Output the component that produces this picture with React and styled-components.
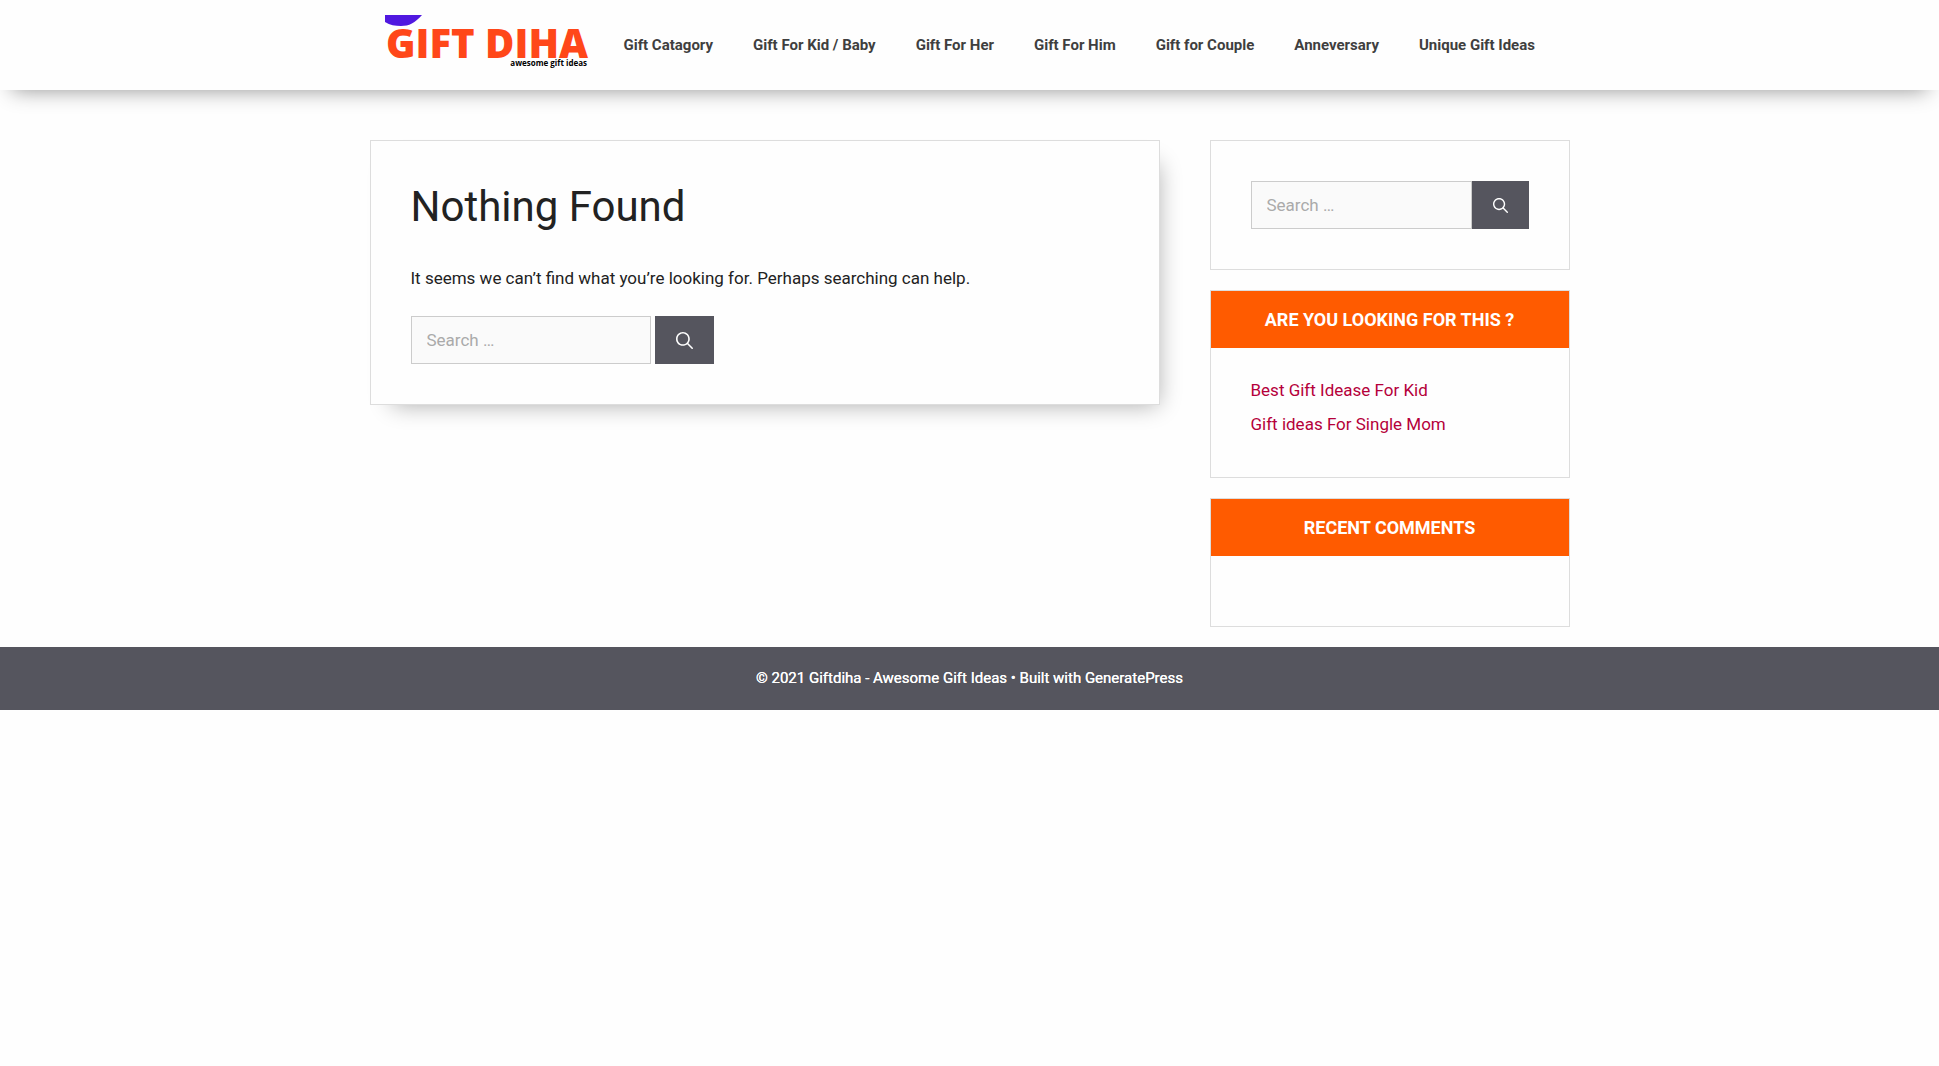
import React, { useState } from "react"
import styled, { createGlobalStyle } from "styled-components"

const navItems = [
    'Gift Catagory',
    'Gift For Kid / Baby',
    'Gift For Her',
    'Gift For Him',
    'Gift for Couple',
    'Anneversary',
    'Unique Gift Ideas',
]

const posts = ['Best Gift Idease For Kid', 'Gift ideas For Single Mom']

const SearchForm = ({ id, wide }) => {
    const [query, setQuery] = useState('')

    return (
        <Form role="search" $wide={wide} onSubmit={(e) => e.preventDefault()}>
            <SearchInput
                id={id}
                type="search"
                aria-label="Search for"
                placeholder="Search …"
                $wide={wide}
                value={query}
                onChange={(e) => setQuery(e.target.value)}
            />
            <SearchButton type="submit" aria-label="Search" $wide={wide}>
                <SearchIcon viewBox="0 0 512 512" $wide={wide}>
                    <path
                        fillRule="evenodd"
                        clipRule="evenodd"
                        d="M208 48c-88.366 0-160 71.634-160 160s71.634 160 160 160 160-71.634 160-160S296.366 48 208 48zM0 208C0 93.125 93.125 0 208 0s208 93.125 208 208c0 48.741-16.765 93.566-44.843 129.024l133.826 134.018c9.366 9.379 9.355 24.575-.025 33.941-9.379 9.366-24.575 9.355-33.941-.025L337.238 370.987C301.747 399.167 256.839 416 208 416 93.125 416 0 322.875 0 208z"
                    />
                </SearchIcon>
            </SearchButton>
        </Form>
    )
}

const Logo = () => (
    <LogoLink href="#" aria-label="Giftdiha - Awesome Gift Ideas">
        <svg width="206" height="60" viewBox="0 0 206 60">
            <path d="M0 0H37C30 8 24 11 16 11C10 11 5 10 0 7Z" fill="#5018e0" />
            <LogoName x="1" y="43">GIFT DIHA</LogoName>
            <LogoTagline x="202" y="51" textAnchor="end">awesome gift ideas</LogoTagline>
        </svg>
    </LogoLink>
)

const App = () => {
    return (
        <>
            <GlobalStyle />
            <Header>
                <HeaderInner>
                    <Logo />
                    <Nav>
                        {navItems.map((item) => (
                            <NavLink href="#" key={item}>{item}</NavLink>
                        ))}
                    </Nav>
                </HeaderInner>
            </Header>

            <Content>
                <Main>
                    <Title>Nothing Found</Title>
                    <Text>It seems we can’t find what you’re looking for. Perhaps searching can help.</Text>
                    <SearchForm id="main-search" />
                </Main>

                <Sidebar>
                    <Widget>
                        <SearchWrap>
                            <SearchForm id="side-search" wide />
                        </SearchWrap>
                    </Widget>
                    <Widget>
                        <WidgetTitle>ARE YOU LOOKING FOR THIS ?</WidgetTitle>
                        <PostList>
                            {posts.map((post) => (
                                <li key={post}><PostLink href="#">{post}</PostLink></li>
                            ))}
                        </PostList>
                    </Widget>
                    <Widget>
                        <WidgetTitle>RECENT COMMENTS</WidgetTitle>
                        <PostList />
                    </Widget>
                </Sidebar>
            </Content>

            <Footer>
                © 2021 Giftdiha - Awesome Gift Ideas • Built with <FooterLink href="#">GeneratePress</FooterLink>
            </Footer>
        </>
    )
}

const GlobalStyle = createGlobalStyle`
    * {
        box-sizing: border-box;
    }

    body {
        margin: 0;
        background: #fefefe;
        color: #222222;
        font-family: Roboto, "Liberation Sans", sans-serif;
        font-size: 17px;
        line-height: 25px;
    }
`

const Header = styled.header`
    background: #fefefe;
    box-shadow: 0 12px 20px -12px rgba(0, 0, 0, 0.43);
`

const HeaderInner = styled.div`
    display: flex;
    align-items: center;
    gap: 13px;
    max-width: 1200px;
    min-height: 90px;
    margin: 0 auto;
    padding-left: 15px;
`

const LogoLink = styled.a`
    display: block;
    height: 60px;
`

const LogoName = styled.text`
    fill: #ff4719;
    font-family: "Open Sans", sans-serif;
    font-size: 40px;
    font-weight: 800;
`

const LogoTagline = styled.text`
    fill: #000000;
    font-family: "Open Sans", sans-serif;
    font-size: 8px;
    font-weight: 700;
`

const Nav = styled.nav`
    display: flex;
    flex-wrap: wrap;
`

const NavLink = styled.a`
    padding: 0 20px;
    color: #3f3f3f;
    font-size: 15px;
    font-weight: 700;
    line-height: 90px;
    text-decoration: none;
    white-space: nowrap;
`

const Content = styled.div`
    display: flex;
    align-items: flex-start;
    gap: 50px;
    max-width: 1200px;
    margin: 50px auto 20px;
`

const Main = styled.main`
    flex: 1;
    padding: 40px;
    border: 1px solid #dddddd;
    background: #fefefe;
    box-shadow: 10px 12px 22px -12px rgba(0, 0, 0, 0.33);
`

const Title = styled.h1`
    margin: 0 0 33px;
    font-size: 42px;
    font-weight: 400;
    line-height: 52px;
`

const Text = styled.p`
    margin: 0 0 25px;
`

const Sidebar = styled.aside`
    display: flex;
    flex-direction: column;
    gap: 20px;
    width: 30%;
`

const Widget = styled.section`
    border: 1px solid #dddddd;
`

const WidgetTitle = styled.h2`
    margin: 0;
    padding: 15px;
    background: #ff5b00;
    color: #ffffff;
    font-size: 18px;
    font-weight: 700;
    line-height: 27px;
    text-align: center;
`

const SearchWrap = styled.div`
    padding: 40px;
`

const PostList = styled.ul`
    display: grid;
    gap: 9px;
    margin: 0;
    padding: 30px 40px 40px;
    list-style: none;
`

const PostLink = styled.a`
    color: #b5003a;
    text-decoration: none;
`

const Form = styled.form`
    display: flex;
    gap: ${({ $wide }) => ($wide ? '0' : '4px')};
`

const SearchInput = styled.input`
    flex: ${({ $wide }) => ($wide ? '1' : '0 1 240px')};
    min-width: 0;
    height: 48px;
    padding: 10px 15px;
    border: 1px solid #cccccc;
    border-radius: 0;
    background: #fafafa;
    color: #666666;
    font: inherit;
    appearance: none;

    &::placeholder {
        color: #aaaaaa;
    }
`

const SearchButton = styled.button`
    display: flex;
    align-items: center;
    justify-content: center;
    width: ${({ $wide }) => ($wide ? '57px' : '59px')};
    height: 48px;
    padding: 0;
    border: 0;
    background: #55555e;
    color: #ffffff;
    cursor: pointer;
`

const SearchIcon = styled.svg`
    width: ${({ $wide }) => ($wide ? '15px' : '17px')};
    height: ${({ $wide }) => ($wide ? '15px' : '17px')};
    fill: currentColor;
`

const Footer = styled.footer`
    padding: 20px;
    background: #55555e;
    color: #ffffff;
    font-size: 15px;
    line-height: 23px;
    text-align: center;
    text-shadow: 0 0 0 #ffffff;
`

const FooterLink = styled.a`
    color: #ffffff;
    text-decoration: none;
`

export default App
